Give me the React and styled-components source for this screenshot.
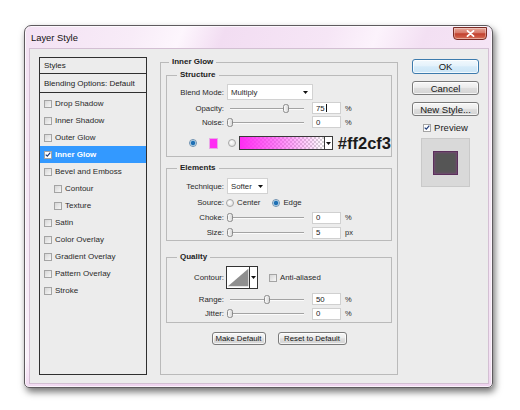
import React from 'react';
import styled, { createGlobalStyle } from 'styled-components';

const Global = createGlobalStyle`
  html, body { margin: 0; padding: 0; background: #ffffff; }
  body { font-family: "Liberation Sans", Arial, sans-serif; color: #222; }
  * { box-sizing: border-box; }
`;

const Stage = styled.div`
  width: 520px;
  height: 410px;
  padding: 25px 0 0 24px;
`;

const Window = styled.div`
  width: 469px;
  height: 363px;
  border: 1px solid #5e5a5e;
  border-radius: 7px 7px 5px 5px;
  background:
    linear-gradient(180deg, rgba(255,255,255,0) 0%, rgba(255,255,255,0) 92%, rgba(235,200,235,0.6) 100%),
    linear-gradient(112deg, #f3e1f3 0%, #f8ecf8 18%, #fdf6fd 26%, #f2ddf2 33%, #f6e6f6 50%, #fcf3fc 58%, #f3e0f3 66%, #f7e8f7 85%, #f2dff2 100%);
  box-shadow: 2px 4px 7px rgba(0,0,0,0.55), inset 0 0 0 1px rgba(255,255,255,0.7);
  display: flex;
  flex-direction: column;
`;

const TitleBar = styled.div`
  height: 22px;
  display: flex;
  justify-content: space-between;
  align-items: flex-start;
  padding: 0 5px 0 6px;
`;

const Title = styled.div`
  margin-top: 6px;
  font-size: 9.4px;
  line-height: 11px;
  color: #111;
`;

const CloseBtn = styled.div`
  width: 34px;
  height: 13px;
  margin-top: 1px;
  border: 1px solid #7a2b25;
  border-radius: 0 0 4px 4px;
  background: linear-gradient(180deg, #e6a597 0%, #d77868 45%, #c2402e 52%, #cf5d48 85%, #e08a70 100%);
  display: flex;
  align-items: center;
  justify-content: center;
  box-shadow: inset 0 0 0 1px rgba(255,255,255,0.35);
`;

const Panel = styled.div`
  flex: 1;
  margin: 0 3px 3px 4px;
  background: #ececec;
  border: 1px solid #d3bfd3;
  display: flex;
  align-items: stretch;
  padding: 8px 9px 8px 9px;
`;

/* ---------- left list ---------- */
const List = styled.div`
  width: 108px;
  border: 1px solid #2f2f2f;
  display: flex;
  flex-direction: column;
  margin-right: 13px;
`;

const ListHead = styled.div`
  height: ${p => p.$h}px;
  border-bottom: 1px solid #2f2f2f;
  padding-left: 4px;
  display: flex;
  align-items: center;
  font-size: 8px;
  color: #222;
`;

const Items = styled.div`
  padding-top: 2px;
  display: flex;
  flex-direction: column;
`;

const Item = styled.div`
  height: 17px;
  display: flex;
  align-items: center;
  gap: 3px;
  padding-left: ${p => (p.$indent ? 14 : 4)}px;
  font-size: 8px;
  background: ${p => (p.$active ? '#3399ff' : 'transparent')};
  color: ${p => (p.$active ? '#fff' : '#2a2a2a')};
  font-weight: ${p => (p.$active ? 'bold' : 'normal')};
`;

const Box = styled.div`
  width: 8px;
  height: 8px;
  flex-shrink: 0;
  border: 1px solid #a4a4a4;
  background: ${p => (p.$checked ? '#fff' : 'linear-gradient(135deg, #d6d6d6, #f7f7f7)')};
  display: flex;
  align-items: center;
  justify-content: center;
`;

const CheckBox = ({ checked }) => (
  <Box $checked={checked}>
    {checked && (
      <svg width="7" height="7" viewBox="0 0 7 7">
        <path d="M0.8 3.6 L2.7 5.5 L6.2 1.2" stroke="#203d7a" strokeWidth="1.4" fill="none" />
      </svg>
    )}
  </Box>
);

/* ---------- middle ---------- */
const Group = styled.fieldset`
  margin: ${p => p.$mt || 0}px 0 0 0;
  padding: ${p => p.$pad};
  border: 1px solid ${p => p.$line || '#bababa'};
  min-width: 0;
  width: ${p => (p.$w ? `${p.$w}px` : 'auto')};
  display: flex;
  flex-direction: column;
`;

const Legend = styled.legend`
  font-weight: bold;
  font-size: 8px;
  line-height: 10px;
  padding: 0 3px;
  margin-left: ${p => p.$ml}px;
  color: #222;
`;

const Row = styled.div`
  height: ${p => p.$h}px;
  margin-top: ${p => p.$mt || 0}px;
  display: flex;
  align-items: center;
  font-size: 7.8px;
  color: #2a2a2a;
`;

const Label = styled.div`
  width: 57px;
  text-align: right;
  flex-shrink: 0;
`;

const Select = styled.div`
  width: ${p => p.$w}px;
  height: 16px;
  margin-left: 3px;
  background: #fff;
  border: 1px solid #d2d2d2;
  display: flex;
  align-items: center;
  justify-content: space-between;
  padding: 0 4px 0 3px;
`;

const Arrow = () => (
  <svg width="5" height="3" viewBox="0 0 5 3">
    <path d="M0 0 H5 L2.5 3 Z" fill="#111" />
  </svg>
);

const Track = styled.div`
  position: relative;
  width: 74px;
  height: 11px;
  margin: 0 8px 0 6px;
  &::before {
    content: '';
    position: absolute;
    left: 0;
    right: 0;
    top: 5px;
    height: 1px;
    background: #a3a3a3;
    box-shadow: 0 1px 0 #fbfbfb;
  }
`;

const Thumb = styled.svg`
  position: absolute;
  top: 1px;
`;

const Slider = ({ value }) => (
  <Track>
    <Thumb width="6" height="9" viewBox="0 0 6 9" style={{ left: `${(value / 100) * 74 - 3}px` }}>
      <defs>
        <linearGradient id="tg" x1="0" y1="0" x2="1" y2="0">
          <stop offset="0" stopColor="#ffffff" />
          <stop offset="1" stopColor="#d4d4d4" />
        </linearGradient>
      </defs>
      <rect x="0.5" y="0.5" width="5" height="8" rx="2" fill="url(#tg)" stroke="#8a8a8a" />
    </Thumb>
  </Track>
);

const NumBox = styled.div`
  width: 29px;
  height: 12px;
  background: #fff;
  border: 1px solid #d0d0d0;
  padding-left: 3px;
  display: flex;
  align-items: center;
  margin-right: 4px;
  color: #222;
`;

const Caret = styled.span`
  display: inline-block;
  width: 1px;
  height: 8px;
  background: #111;
  margin-left: 1px;
`;

const Unit = styled.span`
  font-size: 7.5px;
`;

const RadioDot = styled.div`
  width: 8px;
  height: 8px;
  flex-shrink: 0;
  border-radius: 50%;
  margin-left: ${p => p.$ml || 0}px;
  border: 1px solid ${p => (p.$on ? '#6b8fae' : '#a6a6a6')};
  background: ${p => (p.$on
    ? 'radial-gradient(circle at 50% 50%, #1f6fb3 0 1.6px, #5aa4d8 2.2px, #dfeaf3 2.8px)'
    : 'radial-gradient(circle at 40% 40%, #ffffff, #d8d8d8)')};
`;

const Swatch = styled.div`
  width: 9px;
  height: 11px;
  margin-left: 12px;
  background: #ff2cf3;
  border: 1px solid #e9a8e6;
`;

const GradBox = styled.div`
  width: 94px;
  height: 14px;
  margin-left: 3px;
  border: 1px solid #3a3a3a;
  background: #fff;
  display: flex;
`;

const GradFill = styled.div`
  flex: 1;
  border-right: 1px solid #3a3a3a;
  background:
    linear-gradient(90deg, #ff2cf3 0%, rgba(255,44,243,0.6) 45%, rgba(255,44,243,0) 100%),
    repeating-conic-gradient(#d4d4d4 0 25%, #ffffff 0 50%) 0 0 / 4px 4px;
`;

const ArrowCell = styled.div`
  width: 7px;
  display: flex;
  align-items: center;
  justify-content: center;
`;

const Hex = styled.div`
  margin-left: 5px;
  font-family: "Liberation Sans", Arial, sans-serif;
  font-weight: bold;
  font-size: 16.5px;
  line-height: 16px;
  color: #1b1b1b;
  white-space: nowrap;
  flex-shrink: 0;
`;

const RadioText = styled.span`
  margin-left: 3px;
`;

const ContourBox = styled.div`
  width: 32px;
  height: 23px;
  margin-left: 2px;
  border: 1px solid #333;
  background: #fff;
  display: flex;
`;

const ContourArt = styled.svg`
  border-right: 1px solid #333;
  display: block;
`;

const CheckLabel = styled.div`
  display: flex;
  align-items: center;
  gap: 3px;
  margin-left: ${p => p.$ml || 0}px;
`;

const ButtonRow = styled.div`
  margin-top: 9px;
  display: flex;
  justify-content: center;
  gap: 12px;
`;

const Btn = styled.button`
  width: ${p => p.$w}px;
  height: ${p => p.$h}px;
  padding: 0;
  border: 1px solid ${p => (p.$primary ? '#3d7bad' : '#7a7a7a')};
  border-radius: 3px;
  background: ${p => (p.$primary
    ? 'linear-gradient(180deg, #f2f9fd 0%, #e4f2fb 45%, #d5ebf9 52%, #cbe5f6 100%)'
    : 'linear-gradient(180deg, #f7f7f7 0%, #ececec 45%, #dedede 52%, #d3d3d3 100%)')};
  box-shadow: inset 0 0 0 1px rgba(255,255,255,0.75);
  font-family: "Liberation Sans", Arial, sans-serif;
  font-size: ${p => p.$fs}px;
  color: #151515;
  display: flex;
  align-items: center;
  justify-content: center;
`;

/* ---------- right ---------- */
const Side = styled.div`
  width: 67px;
  margin-left: 14px;
  padding-top: 2px;
  display: flex;
  flex-direction: column;
  align-items: center;
  gap: 7px;
`;

const PreviewRow = styled.div`
  display: flex;
  align-items: center;
  gap: 3px;
  font-size: 9.5px;
  color: #222;
  margin-top: -1px;
`;

const PreviewFrame = styled.div`
  width: 49px;
  height: 49px;
  margin-top: -2px;
  background: #d9d9d9;
  border: 1px solid #c9c9c9;
  display: flex;
  align-items: center;
  justify-content: center;
`;

const PreviewSwatch = styled.div`
  width: 25px;
  height: 24px;
  background: #555555;
  box-shadow: inset 0 0 0 1px #5b2f5b, inset 0 0 3px 1px #8a3e8a;
`;

const listItems = [
  { label: 'Drop Shadow' },
  { label: 'Inner Shadow' },
  { label: 'Outer Glow' },
  { label: 'Inner Glow', checked: true, active: true },
  { label: 'Bevel and Emboss' },
  { label: 'Contour', indent: true },
  { label: 'Texture', indent: true },
  { label: 'Satin' },
  { label: 'Color Overlay' },
  { label: 'Gradient Overlay' },
  { label: 'Pattern Overlay' },
  { label: 'Stroke' },
];

const SliderRow = ({ label, value, num, unit, h = 14, mt, caret }) => (
  <Row $h={h} $mt={mt}>
    <Label>{label}</Label>
    <Slider value={value} />
    <NumBox>
      {num}
      {caret && <Caret />}
    </NumBox>
    <Unit>{unit}</Unit>
  </Row>
);

export default function App() {
  return (
    <>
      <Global />
      <Stage>
        <Window>
          <TitleBar>
            <Title>Layer Style</Title>
            <CloseBtn>
              <svg width="9" height="7" viewBox="0 0 9 7">
                <path d="M1.5 0.8 L7.5 6.2 M7.5 0.8 L1.5 6.2" stroke="#fff" strokeWidth="1.8" strokeLinecap="round" />
              </svg>
            </CloseBtn>
          </TitleBar>
          <Panel>
            <List>
              <ListHead $h={16}>Styles</ListHead>
              <ListHead $h={19}>Blending Options: Default</ListHead>
              <Items>
                {listItems.map(it => (
                  <Item key={it.label} $indent={it.indent} $active={it.active}>
                    <CheckBox checked={it.checked} />
                    {it.label}
                  </Item>
                ))}
              </Items>
            </List>

            <Group $w={238} $pad="3px 5px 0 5px">
              <Legend $ml={3}>Inner Glow</Legend>

              <Group $pad="4px 0 5px 0">
                <Legend $ml={10}>Structure</Legend>
                <Row $h={16}>
                  <Label>Blend Mode:</Label>
                  <Select $w={86}>
                    <span>Multiply</span>
                    <Arrow />
                  </Select>
                </Row>
                <SliderRow label="Opacity:" value={75} num="75" unit="%" mt={1} caret />
                <SliderRow label="Noise:" value={0} num="0" unit="%" />
                <Row $h={16} $mt={6}>
                  <RadioDot $on $ml={22} />
                  <Swatch />
                  <RadioDot $ml={10} />
                  <GradBox>
                    <GradFill />
                    <ArrowCell>
                      <Arrow />
                    </ArrowCell>
                  </GradBox>
                  <Hex>#ff2cf3</Hex>
                </Row>
              </Group>

              <Group $mt={6} $pad="5px 0 0 0">
                <Legend $ml={10}>Elements</Legend>
                <Row $h={16}>
                  <Label>Technique:</Label>
                  <Select $w={41}>
                    <span>Softer</span>
                    <Arrow />
                  </Select>
                </Row>
                <Row $h={15} $mt={1}>
                  <Label>Source:</Label>
                  <RadioDot $ml={2} />
                  <RadioText>Center</RadioText>
                  <RadioDot $on $ml={12} />
                  <RadioText>Edge</RadioText>
                </Row>
                <SliderRow label="Choke:" value={0} num="0" unit="%" h={15} />
                <SliderRow label="Size:" value={0} num="5" unit="px" h={15} />
              </Group>

              <Group $mt={11} $pad="4px 0 1px 0">
                <Legend $ml={10}>Quality</Legend>
                <Row $h={23}>
                  <Label>Contour:</Label>
                  <ContourBox>
                    <ContourArt width="24" height="21" viewBox="0 0 24 21">
                      <path d="M1 20 L23 1 L23 20 Z" fill="#8f8f8f" />
                    </ContourArt>
                    <ArrowCell>
                      <Arrow />
                    </ArrowCell>
                  </ContourBox>
                  <CheckLabel $ml={11}>
                    <CheckBox />
                    <span>Anti-aliased</span>
                  </CheckLabel>
                </Row>
                <SliderRow label="Range:" value={50} num="50" unit="%" mt={3} />
                <SliderRow label="Jitter:" value={0} num="0" unit="%" h={15} />
              </Group>

              <ButtonRow>
                <Btn $w={54} $h={13} $fs={7.8}>Make Default</Btn>
                <Btn $w={69} $h={13} $fs={7.8}>Reset to Default</Btn>
              </ButtonRow>
            </Group>

            <Side>
              <Btn $primary $w={67} $h={15} $fs={9.5}>OK</Btn>
              <Btn $w={67} $h={14} $fs={9.5}>Cancel</Btn>
              <Btn $w={67} $h={14} $fs={9.5}>New Style...</Btn>
              <PreviewRow>
                <CheckBox checked />
                <span>Preview</span>
              </PreviewRow>
              <PreviewFrame>
                <PreviewSwatch />
              </PreviewFrame>
            </Side>
          </Panel>
        </Window>
      </Stage>
    </>
  );
}
